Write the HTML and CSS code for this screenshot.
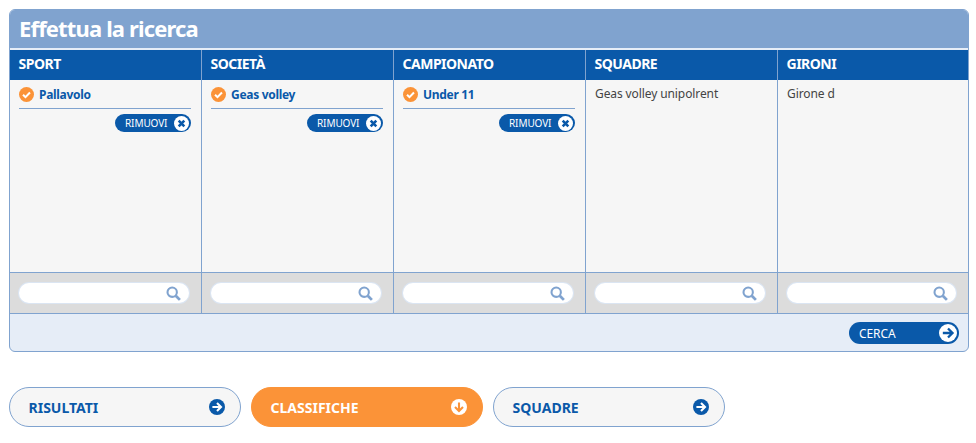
FILE: index.html
```html
<!DOCTYPE html>
<html lang="it">
<head>
    <meta charset="UTF-8" />
    <title>Effettua la ricerca</title>
    <link rel="stylesheet" href="styles.css">
</head>
<body>
    <svg class="defs" width="0" height="0">
        <symbol id="i-check" viewBox="0 0 16 16"><circle cx="8" cy="8" r="8" fill="currentColor"/><path d="M4.3 8.2l2.6 2.6 4.8-5" fill="none" stroke="#fff" stroke-width="2.2"/></symbol>
        <symbol id="i-close" viewBox="0 0 16 16"><circle cx="8" cy="8" r="8" fill="#fff"/><path d="M5 5l6 6M11 5l-6 6" fill="none" stroke="#0a59a9" stroke-width="2.8"/></symbol>
        <symbol id="i-arrow" viewBox="0 0 16 16"><circle cx="8" cy="8" r="8" fill="currentColor"/><path d="M3.4 8h8.4M8 4l4 4-4 4" fill="none" stroke="var(--arrow)" stroke-width="2.1"/></symbol>
        <symbol id="i-down" viewBox="0 0 16 16"><circle cx="8" cy="8" r="8" fill="#fff"/><path d="M8 3.4v8.4M4 8l4 4 4-4" fill="none" stroke="#fb9338" stroke-width="2.1"/></symbol>
        <symbol id="i-search" viewBox="0 0 16 16"><circle cx="6.6" cy="6.6" r="5" fill="none" stroke="#80a3cf" stroke-width="2.2"/><path d="M10.4 10.4l4.4 4.4" stroke="#80a3cf" stroke-width="3"/></symbol>
    </svg>

    <div class="panel">
        <h2 class="panel-title">Effettua la ricerca</h2>
        <div class="columns">
            <div class="col">
                <div class="col-head">SPORT</div>
                <div class="col-body">
                    <div class="picked"><svg class="ico-check"><use href="#i-check"/></svg>Pallavolo</div>
                    <div class="remove-row"><span class="pill-remove">RIMUOVI<svg class="ico-close"><use href="#i-close"/></svg></span></div>
                </div>
                <div class="col-search"><div class="search-box"><svg class="ico-search"><use href="#i-search"/></svg></div></div>
            </div>
            <div class="col">
                <div class="col-head">SOCIETÀ</div>
                <div class="col-body">
                    <div class="picked"><svg class="ico-check"><use href="#i-check"/></svg>Geas volley</div>
                    <div class="remove-row"><span class="pill-remove">RIMUOVI<svg class="ico-close"><use href="#i-close"/></svg></span></div>
                </div>
                <div class="col-search"><div class="search-box"><svg class="ico-search"><use href="#i-search"/></svg></div></div>
            </div>
            <div class="col">
                <div class="col-head">CAMPIONATO</div>
                <div class="col-body">
                    <div class="picked"><svg class="ico-check"><use href="#i-check"/></svg>Under 11</div>
                    <div class="remove-row"><span class="pill-remove">RIMUOVI<svg class="ico-close"><use href="#i-close"/></svg></span></div>
                </div>
                <div class="col-search"><div class="search-box"><svg class="ico-search"><use href="#i-search"/></svg></div></div>
            </div>
            <div class="col">
                <div class="col-head">SQUADRE</div>
                <div class="col-body"><div class="item">Geas volley unipolrent</div></div>
                <div class="col-search"><div class="search-box"><svg class="ico-search"><use href="#i-search"/></svg></div></div>
            </div>
            <div class="col">
                <div class="col-head">GIRONI</div>
                <div class="col-body"><div class="item">Girone d</div></div>
                <div class="col-search"><div class="search-box"><svg class="ico-search"><use href="#i-search"/></svg></div></div>
            </div>
        </div>
        <div class="panel-foot">
            <span class="btn-cerca">CERCA<svg class="ico-go"><use href="#i-arrow"/></svg></span>
        </div>
    </div>

    <div class="tabs">
        <div class="tab">RISULTATI<svg class="ico-tab"><use href="#i-arrow"/></svg></div>
        <div class="tab tab-active">CLASSIFICHE<svg class="ico-tab"><use href="#i-down"/></svg></div>
        <div class="tab">SQUADRE<svg class="ico-tab"><use href="#i-arrow"/></svg></div>
    </div>
</body>
</html>
```

FILE: styles.css
```css
body {
    margin: 0;
    padding: 9px;
    background: #fff;
    font-family: "Noto Sans", Arial, sans-serif;
    color: #0a59a9;
}
.defs {
    position: absolute;
}
.panel {
    width: 960px;
    box-sizing: border-box;
    border: 1px solid #80a3cf;
    border-radius: 6px;
    background: #e6edf7;
    overflow: hidden;
}
.panel-title {
    margin: -1px -1px 0;
    height: 39px;
    padding-left: 10px;
    background: #80a3cf;
    color: #fff;
    font-size: 22px;
    line-height: 39px;
    font-weight: 700;
    letter-spacing: -0.85px;
}
.columns {
    display: flex;
    margin-top: 2px;
}
.col {
    width: 192px;
    box-sizing: border-box;
    border-right: 1px solid #80a3cf;
}
.col:last-child {
    flex: 1;
    border-right: none;
}
.col-head {
    height: 30px;
    padding-left: 8.5px;
    background: #0a59a9;
    color: #fff;
    font-size: 14px;
    line-height: 27px;
    font-weight: 700;
    letter-spacing: -0.5px;
}
.col-body {
    height: 193px;
    box-sizing: border-box;
    padding: 4px 10px 0 9px;
    background: #f6f6f6;
    border-bottom: 1px solid #80a3cf;
}
.picked {
    display: flex;
    align-items: center;
    height: 20px;
    padding-bottom: 4px;
    border-bottom: 1px solid #80a3cf;
    font-size: 12px;
    font-weight: 700;
    letter-spacing: -0.3px;
}
.ico-check {
    width: 15px;
    height: 15px;
    margin-right: 5px;
    color: #fb9338;
}
.remove-row {
    display: flex;
    justify-content: flex-end;
    margin-top: 5px;
}
.pill-remove {
    display: flex;
    align-items: center;
    justify-content: space-between;
    width: 76px;
    height: 18px;
    box-sizing: border-box;
    padding: 0 2px 0 10px;
    border-radius: 9px;
    background: #0a59a9;
    color: #fff;
    font-size: 10px;
    letter-spacing: -0.1px;
}
.ico-close {
    width: 15px;
    height: 15px;
}
.item {
    padding-top: 1px;
    font-size: 12px;
    line-height: 17px;
    color: #444;
    letter-spacing: -0.1px;
}
.col-search {
    height: 40px;
    box-sizing: border-box;
    padding: 10px 12px 0 9px;
    background: #dcdcdc;
}
.search-box {
    display: flex;
    align-items: center;
    justify-content: flex-end;
    height: 20px;
    padding-right: 8px;
    border-radius: 10px;
    background: #fff;
    box-shadow: 0 0 0 1px #dbe5f2;
}
.ico-search {
    width: 15px;
    height: 15px;
}
.panel-foot {
    display: flex;
    justify-content: flex-end;
    height: 38px;
    box-sizing: border-box;
    padding: 8px 9px 0 0;
    border-top: 1px solid #80a3cf;
}
.btn-cerca {
    --arrow: #0a59a9;
    display: flex;
    align-items: center;
    justify-content: space-between;
    width: 110px;
    height: 22px;
    box-sizing: border-box;
    padding: 0 2px 0 10px;
    border-radius: 11px;
    background: #0a59a9;
    color: #fff;
    font-size: 12px;
    letter-spacing: -0.1px;
}
.ico-go {
    width: 18px;
    height: 18px;
    color: #fff;
}
.tabs {
    display: flex;
    gap: 10px;
    margin-top: 35px;
}
.tab {
    --arrow: #fff;
    display: flex;
    align-items: center;
    justify-content: space-between;
    width: 232px;
    height: 40px;
    box-sizing: border-box;
    padding: 0 15px 0 18.5px;
    border: 1px solid #80a3cf;
    border-radius: 20px;
    background: #f6f6f6;
    color: #0a59a9;
    font-size: 14px;
    font-weight: 700;
}
.tab-active {
    background: #fb9338;
    border-color: #fb9338;
    color: #fff;
}
.ico-tab {
    width: 16px;
    height: 16px;
}
```
